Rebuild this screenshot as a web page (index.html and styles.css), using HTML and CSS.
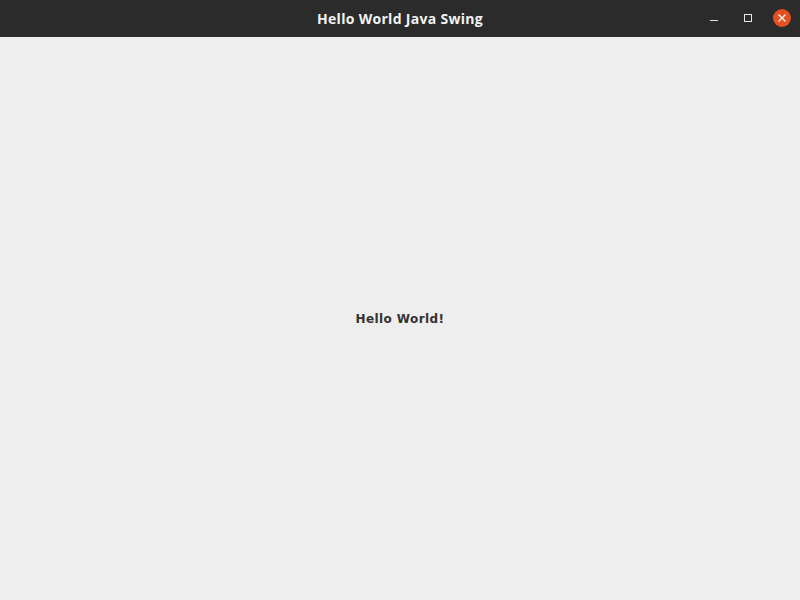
FILE: index.html
```html
<!DOCTYPE html>
<html>
<head>
<meta charset="utf-8">
<link rel="stylesheet" href="styles.css">
</head>
<body>
<div class="window">
  <header class="titlebar">
    <div class="title">Hello World Java Swing</div>
    <div class="controls">
      <span class="btn min"><svg width="10" height="10" viewBox="0 0 10 10"><rect x="1" y="7" width="8" height="1" fill="#e6e6e6"/></svg></span>
      <span class="btn max"><svg width="10" height="10" viewBox="0 0 10 10"><rect x="1.5" y="1.5" width="7" height="7" fill="none" stroke="#e6e6e6" stroke-width="1"/></svg></span>
      <span class="btn close"><svg width="18" height="18" viewBox="0 0 18 18"><circle cx="9" cy="9" r="9" fill="#e2511f"/><path d="M5.5 5.5 L12.5 12.5 M12.5 5.5 L5.5 12.5" stroke="#f5f5f5" stroke-width="1.4"/></svg></span>
    </div>
  </header>
  <main class="content">
    <span class="label">Hello World!</span>
  </main>
</div>
</body>
</html>
```

FILE: styles.css
```css
html, body {
  margin: 0;
  padding: 0;
  width: 800px;
  height: 600px;
  overflow: hidden;
}
.window {
  width: 800px;
  height: 600px;
  display: flex;
  flex-direction: column;
  background: #eeeeee;
}
.titlebar {
  height: 37px;
  flex: 0 0 37px;
  background: #2b2b2b;
  display: flex;
  align-items: center;
  justify-content: center;
  position: relative;
}
.title {
  font-family: "Open Sans", "DejaVu Sans", sans-serif;
  font-weight: 700;
  font-size: 14px;
  letter-spacing: 0.3px;
  color: #f2f2f2;
}
.controls {
  position: absolute;
  right: 9px;
  top: 9px;
  display: flex;
  align-items: center;
  gap: 16px;
}
.btn {
  display: flex;
  align-items: center;
  justify-content: center;
  width: 18px;
  height: 18px;
}
.content {
  flex: 1;
  display: flex;
  align-items: center;
  justify-content: center;
}
.label {
  font-family: "DejaVu Sans", "Verdana", sans-serif;
  font-weight: 700;
  font-size: 12px;
  letter-spacing: 0.4px;
  color: #333333;
  padding-top: 1px;
}
```
